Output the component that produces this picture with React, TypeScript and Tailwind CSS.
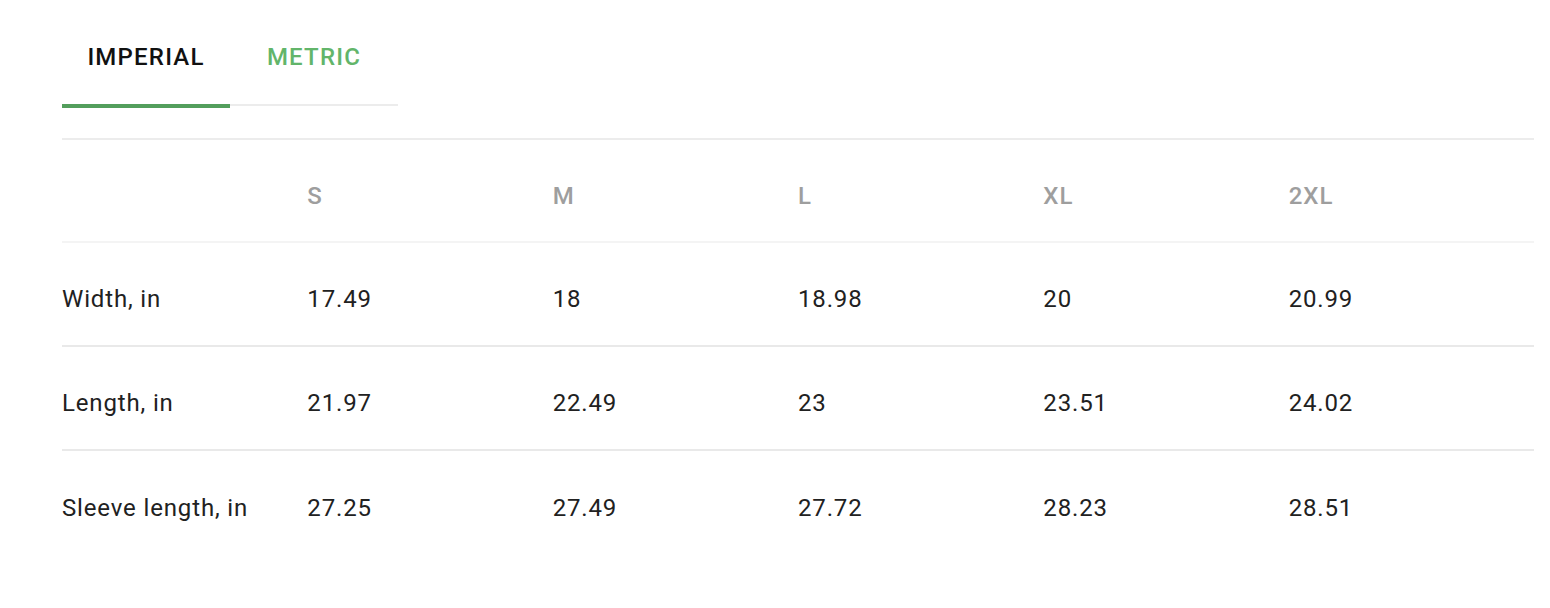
export default function App() {
  const sizes = ["S", "M", "L", "XL", "2XL"];
  const rows = [
    { label: "Width, in", values: ["17.49", "18", "18.98", "20", "20.99"] },
    { label: "Length, in", values: ["21.97", "22.49", "23", "23.51", "24.02"] },
    { label: "Sleeve length, in", values: ["27.25", "27.49", "27.72", "28.23", "28.51"] },
  ];

  return (
    <div className="min-h-screen bg-white font-['Roboto',sans-serif] pl-[62px] pr-[16px] pt-[10px]">
      {/* Tabs */}
      <div className="relative flex w-[336px] border-b-2 border-[#ececec]">
        <button className="relative h-[94px] w-[168px] text-[24px] font-medium text-[#111111] tracking-[1.2px]">
          IMPERIAL
          <span className="absolute left-0 right-0 -bottom-[4px] h-[4px] bg-[#539e5c]" />
        </button>
        <button className="h-[94px] w-[168px] text-[24px] font-medium text-[#62b56a] tracking-[1.2px]">
          METRIC
        </button>
      </div>

      {/* Size table */}
      <div className="mt-[32px] w-[1472px] border-t-2 border-[#ececec]">
        <div className="grid grid-cols-6 h-[103px] items-center pt-[10px] border-b-2 border-[#f4f4f4]">
          <div />
          {sizes.map((s) => (
            <div key={s} className="text-[24px] font-medium text-[#9e9e9e] tracking-[1px]">
              {s}
            </div>
          ))}
        </div>
        {rows.map((r, i) => (
          <div
            key={r.label}
            className={`grid grid-cols-6 h-[104px] items-center pt-[10px] text-[24px] text-[#212121] tracking-[0.85px] ${
              i < rows.length - 1 ? "border-b-2 border-[#e9e9e9]" : ""
            }`}
          >
            <div>{r.label}</div>
            {r.values.map((v, j) => (
              <div key={j}>{v}</div>
            ))}
          </div>
        ))}
      </div>
    </div>
  );
}
